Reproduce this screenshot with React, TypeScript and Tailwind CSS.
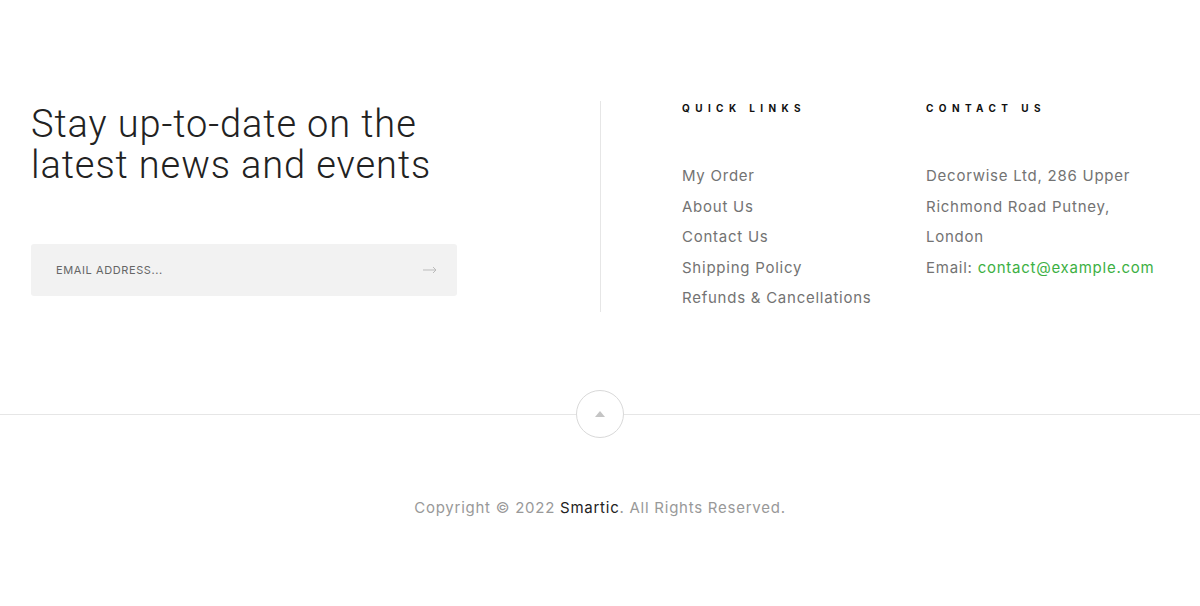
import React from "react";

const quickLinks = [
  "My Order",
  "About Us",
  "Contact Us",
  "Shipping Policy",
  "Refunds & Cancellations",
];

export default function App() {
  return (
    <footer className="w-[1200px] h-[606px] bg-white font-['Inter',sans-serif] text-[#737373]">
      <div className="flex pt-[101px]">
        <div className="w-[600px] pl-[31px]">
          <h2 className="mt-[3px] font-['Roboto',sans-serif] text-[38px] font-light leading-[41px] tracking-[0.9px] text-[#222]">
            Stay up-to-date on the
            <br />
            latest news and events
          </h2>
          <form className="mt-[58px] flex h-[52px] w-[426px] items-center justify-between rounded-[3px] bg-[#f2f2f2] pl-[25px] pr-[20px]">
            <input
              type="text"
              placeholder="EMAIL ADDRESS..."
              className="w-[300px] bg-transparent text-[11px] tracking-[0.6px] text-[#555] placeholder:text-[#666] focus:outline-none"
            />
            <button type="button" className="text-[#bbb]">
              <svg width="14" height="8" viewBox="0 0 14 8" fill="none" stroke="currentColor" strokeWidth="1">
                <path d="M0 4h13M10 1l3 3-3 3" />
              </svg>
            </button>
          </form>
        </div>
        <div className="flex h-[211px] border-l border-[#e6e6e6] pl-[81px]">
          <div className="w-[244px]">
            <h4 className="pt-[1px] text-[10px] font-bold leading-[12px] tracking-[5.4px] text-[#111]">
              QUICK LINKS
            </h4>
            <ul className="mt-[47px] flex flex-col text-[15px] leading-[30.5px] tracking-[0.75px]">
              {quickLinks.map((l) => (
                <li key={l}>
                  <a href="#" className="hover:text-[#222]">
                    {l}
                  </a>
                </li>
              ))}
            </ul>
          </div>
          <div className="w-[270px]">
            <h4 className="pt-[1px] text-[10px] font-bold leading-[12px] tracking-[5.4px] text-[#111]">
              CONTACT US
            </h4>
            <div className="mt-[47px] text-[15px] leading-[30.5px] tracking-[0.75px]">
              <p>Decorwise Ltd, 286 Upper</p>
              <p>Richmond Road Putney,</p>
              <p>London</p>
              <p>
                Email: <a href="#" className="text-[#3cb043]">contact@example.com</a>
              </p>
            </div>
          </div>
        </div>
      </div>

      <div className="mt-[78px] flex items-center">
        <div className="h-px flex-1 bg-[#e6e6e6]" />
        <button
          type="button"
          className="flex h-[48px] w-[48px] items-center justify-center rounded-full border border-[#d9d9d9] bg-white"
        >
          <svg width="10" height="6" viewBox="0 0 10 6" fill="#c4c4c4">
            <path d="M5 0l5 6H0z" />
          </svg>
        </button>
        <div className="h-px flex-1 bg-[#e6e6e6]" />
      </div>

      <p className="mt-[59px] text-center text-[15px] tracking-[0.75px] text-[#999]">
        Copyright © 2022 <span className="text-[#222]">Smartic</span>. All Rights Reserved.
      </p>
    </footer>
  );
}
